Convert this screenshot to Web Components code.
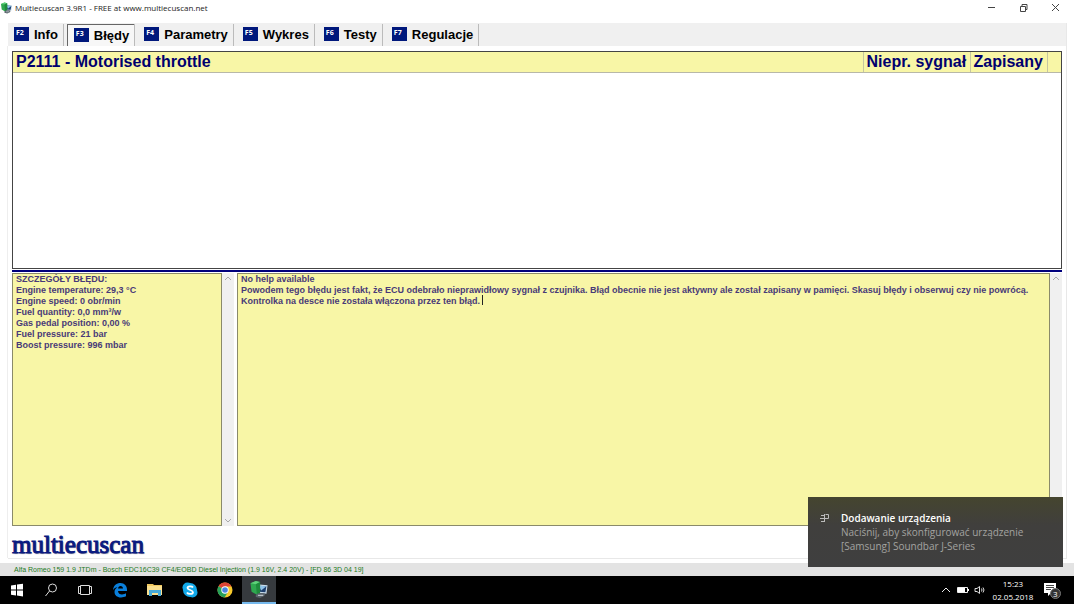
<!DOCTYPE html>
<html lang="pl">
<head>
<meta charset="utf-8">
<title>Multiecuscan 3.9R1</title>
<style>
html, body { margin: 0; height: 100%; }
body { font-family: "Liberation Sans", Arial, sans-serif; background: #fff; overflow: hidden; }
</style>
</head>
<body>
<ecu-desktop></ecu-desktop>

<template id="t-desktop">
<style>
:host { display: flex; flex-direction: column; height: 100vh; min-height: 400px; position: relative; }
ecu-frame { flex: 1; min-height: 0; }
ecu-toast { position: absolute; right: 11px; bottom: 37px; }
</style>
<ecu-titlebar>Multiecuscan 3.9R1 - FREE at www.multiecuscan.net</ecu-titlebar>
<ecu-frame></ecu-frame>
<ecu-status>Alfa Romeo 159 1.9 JTDm - Bosch EDC16C39 CF4/EOBD Diesel Injection (1.9 16V, 2.4 20V) - [FD 86 3D 04 19]</ecu-status>
<ecu-taskbar></ecu-taskbar>
<ecu-toast>
  <span slot="title">Dodawanie urządzenia</span>
  <span slot="line1">Naciśnij, aby skonfigurować urządzenie</span>
  <span slot="line2">[Samsung] Soundbar J-Series</span>
</ecu-toast>
</template>

<template id="t-icon">
<style>
:host { display: block; width: 16px; height: 16px; }
svg { display: block; width: 100%; height: 100%; }
</style>
<svg viewBox="0 0 16 16" aria-hidden="true">
  <path d="M6 3l10 1-1 8-9-1z" fill="#c9dcea"/>
  <path d="M8 4.500l7 .5-1 5.500-6-.5z" fill="#1d3f6e"/>
  <path d="M8 4.500l7 .5-5 4z" fill="#8fc1e8"/>
  <path d="M0 2l5-2 4 1v10l-3 2-5-3z" fill="#2fa850"/>
  <path d="M0 2l5-2 4 1-4 2z" fill="#5fd07a"/>
  <path d="M5 3l4-2v10l-3 2z" fill="#1f8a3c"/>
  <path d="M5 13c2-2 6-2 9-1l-1 2-4 2-4-1z" fill="#59636b"/>
  <path d="M7 13.500h5" stroke="#c6ced3" fill="none"/>
</svg>
</template>

<template id="t-titlebar">
<style>
:host { display: flex; align-items: center; height: 16px; padding: 0 11px 7px 1px; gap: 3px; color: #222; font: 8px/16px "Open Sans", "Noto Sans", sans-serif; }
ecu-icon { width: 11px; height: 12px; }
.name { flex: 1; }
.ctl { display: flex; gap: 18px; }
button { width: 14px; height: 14px; padding: 2px; border: 0; background: none; }
svg { display: block; width: 10px; height: 10px; }
</style>
<ecu-icon></ecu-icon><span class="name"><slot></slot></span>
<div class="ctl">
  <button aria-label="Minimalizuj"><svg viewBox="0 0 10 10" fill="none" stroke="#444"><path d="M1 4.500h7"/></svg></button>
  <button aria-label="Przywróć"><svg viewBox="0 0 10 10" fill="none" stroke="#444"><path d="M1.500 3.500h5v5h-5zM3 3V1.500h5v5H7"/></svg></button>
  <button aria-label="Zamknij"><svg viewBox="0 0 10 10" fill="none" stroke="#444"><path d="M1 1l7 7M8 1l-7 7"/></svg></button>
</div>
</template>

<template id="t-frame">
<style>
:host { display: flex; flex-direction: column; margin: 0 7px 4px 8px; border-right: 1px solid #e8e8e8; border-bottom: 1px solid #e8e8e8; }
nav { display: flex; height: 23px; background: #f0f0f0; }
main { display: flex; flex-direction: column; flex: 1; min-height: 0; padding: 5px 4px 0; border-left: 1px solid #eee; margin-left: -1px; }
ecu-faults { flex: 216 1 0; min-height: 0; }
.bar { height: 2px; margin: 1px 0; background: #00007c; }
.details { display: grid; grid-template-columns: 222px 1fr; gap: 3px; flex: 254 1 0; min-height: 0; }
.logo { height: 32px; font: 25px/38px "Liberation Serif", serif; color: #0a1a80; -webkit-text-stroke: 1px #0a1a80; text-shadow: 1px 1px 1px #8a8a9a; }
</style>
<nav>
  <ecu-tab key="F2">Info</ecu-tab><ecu-tab key="F3" active>Błędy</ecu-tab><ecu-tab key="F4">Parametry</ecu-tab><ecu-tab key="F5">Wykres</ecu-tab><ecu-tab key="F6">Testy</ecu-tab><ecu-tab key="F7">Regulacje</ecu-tab>
</nav>
<main>
  <ecu-faults></ecu-faults>
  <div class="bar"></div>
  <div class="details"><ecu-memo label="Szczegóły błędu" name="details"></ecu-memo><ecu-memo label="Pomoc" name="help" caret></ecu-memo></div>
  <div class="logo">multiecuscan</div>
</main>
</template>

<template id="t-tab">
<style>
:host { display: block; border-right: 1px solid #bbb; height: 22px; box-sizing: border-box; margin-top: 1px; }
button { display: flex; align-items: center; gap: 5px; height: 22px; border: 0; margin: 0 0 0 3px; padding: 0 5px 0 6px; background: none; color: #000; font: bold 13px/22px "Liberation Sans", Arial, sans-serif; }
:host(:first-child) button { margin-left: 0; }
:host([active]) button { border-left: 1px solid #666; border-top: 1px solid #666; background: #f7f7f7; }
kbd { width: 15px; height: 14px; margin-bottom: 2px; box-sizing: border-box; padding-left: 2px; background: #00187c; color: #fff; font: bold 7px/11px "Open Sans", sans-serif; text-align: left; }
</style>
<button><kbd></kbd><slot></slot></button>
</template>

<template id="t-faults">
<style>
:host { display: block; border: 1px solid #444; background: #fff; box-sizing: border-box; }
table { width: 100%; border-collapse: collapse; table-layout: fixed; color: #00006e; font: bold 16px/20px "Liberation Sans", Arial, sans-serif; }
td { height: 20px; padding: 0 3px; background: #f8f6a6; border-right: 1px solid #c6c6a0; border-bottom: 1px solid #b8b8a8; white-space: nowrap; }
td:last-child { border-right: 0; }
.kind { width: 107px; } .state { width: 77px; } .end { width: 14px; }
</style>
<table aria-label="Błędy">
<colgroup><col><col class="kind"><col class="state"><col class="end"></colgroup>
<tbody><tr><td>P2111 - Motorised throttle</td><td>Niepr. sygnał</td><td>Zapisany</td><td></td></tr></tbody></table>
</template>

<template id="t-memo">
<style>
:host { display: flex; position: relative; min-height: 0; min-width: 0; }
textarea { flex: 1; min-width: 0; margin: 0; padding: 0 3px; border: 1px solid #8a8a6a; border-radius: 0; outline: 0; resize: none; overflow: hidden; background: #f8f6a6; color: #483a78; font: bold 9px/11px "Liberation Sans", Arial, sans-serif; }
.scroll { display: flex; flex-direction: column; justify-content: space-between; width: 12px; background: #f0f0f0; }
svg { display: block; width: 12px; height: 12px; }
.caret { display: none; position: absolute; left: 245px; top: 22px; width: 1px; height: 10px; background: #222; }
:host([caret]) .caret { display: block; }
</style>
<textarea readonly spellcheck="false"></textarea>
<div class="scroll"><svg viewBox="0 0 12 12" fill="none" stroke="#aaa"><path d="M3 7l3-3 3 3"/></svg><svg viewBox="0 0 12 12" fill="none" stroke="#aaa"><path d="M3 5l3 3 3-3"/></svg></div>
<i class="caret"></i>
</template>

<template id="t-status">
<style>
:host { display: block; height: 13px; padding-left: 14px; background: #e3e3e3; color: #1c7a1c; font: 7px/13px "Liberation Sans", Arial, sans-serif; white-space: nowrap; overflow: hidden; }
</style><slot></slot>
</template>

<template id="t-toast">
<style>
:host { display: grid; grid-template-columns: 10px 1fr; gap: 11px; width: 255px; height: 70px; box-sizing: border-box; padding: 14px 12px 0; background: linear-gradient(#45452f, #403f3d 40%, #3f3f3f); color: #a3a3a0; font: 10px/14px "Open Sans", "Noto Sans", sans-serif; white-space: nowrap; }
svg { width: 10px; height: 10px; margin-top: 2px; }
p { margin: 0; }
.t { color: #fff; font-weight: 600; }
</style>
<svg viewBox="0 0 10 10" fill="none" stroke="#bbb" aria-hidden="true"><path d="M4.500 1v8M0 5.500h8.500M1 2.500h3M1 8.500h3M5.500 1.500h3v4"/></svg>
<div><p class="t"><slot name="title"></slot></p><p><slot name="line1"></slot></p><p><slot name="line2"></slot></p></div>
</template>

<template id="t-taskbar">
<style>
:host { display: flex; height: 28px; background: #000; color: #fff; }
button { flex: none; display: flex; align-items: center; justify-content: center; width: 35px; height: 28px; padding: 0; border: 0; background: none; color: inherit; }
.sys { width: 34px; }
.app { width: 34px; box-sizing: border-box; background: #363a3e; border-bottom: 2px solid #76b9ed; }
.app ecu-icon { width: 18px; height: 17px; }
svg { display: block; width: 16px; height: 16px; }
.tray { margin-left: auto; display: flex; align-items: center; padding-right: 8px; }
.tray button { width: 17px; }
.tray svg { width: 12px; height: 12px; }
.tray .clock { display: block; width: 50px; font: 8px/13px "Open Sans", "Noto Sans", sans-serif; text-align: center; }
.clock span { display: block; }
.tray .note { width: 28px; }
.tray .note svg { width: 17px; height: 18px; }
text { font: 8px "Open Sans", sans-serif; }
</style>
<button class="sys" aria-label="Start"><svg viewBox="0 0 16 16" fill="#fff"><path d="M2 3.500l5-.8V7.500H2zM8 2.600l6-.8v5.700H8zM2 8.500h5v5l-5-.8zM8 8.500h6v6l-6-.9z"/></svg></button>
<button class="sys" aria-label="Szukaj"><svg viewBox="0 0 16 16" fill="none" stroke="#ddd"><circle cx="9.500" cy="6" r="4"/><path d="M6.500 9l-4 5"/></svg></button>
<button class="sys" aria-label="Widok zadań"><svg viewBox="0 0 16 16" fill="none" stroke="#ddd"><path d="M3.500 3.500h9v9h-9zM3 4.500H1.500v7H3M13 4.500h1.500v7H13"/></svg></button>
<button aria-label="Edge"><svg viewBox="0 0 16 16"><path fill="#0a7fdb" d="M1 8C1.500 3.500 4.500 1 8.500 1 12.500 1 15 4 15 7.500V9H6c0 2.500 2 3.500 4 3.500 1.500 0 3-.5 4-1.200v3C12.500 15 11 15.500 9 15.500 5 15.500 2.500 13 2.500 10c0-2 1-3.700 3-4.700C3.500 5.500 2 6.500 1 8zM6 6.500h5C11 5 10 4 8.500 4 7.200 4 6.300 5 6 6.500z"/></svg></button>
<button aria-label="Eksplorator plików"><svg viewBox="0 0 16 16"><path fill="#f0c860" d="M0 2h6l1 1h8v4H0z"/><path fill="#fbe08f" d="M0 4h15v9H0z"/><path fill="#47a9d8" d="M2 8h12v6h-3v-3H5v3H2z"/></svg></button>
<button aria-label="Skype"><svg viewBox="0 0 16 16"><circle cx="5.500" cy="5.500" r="5" fill="#12a9ea"/><circle cx="10.500" cy="10.500" r="5" fill="#12a9ea"/><circle cx="8" cy="8" r="7" fill="#12a9ea"/><path d="M11 5.500C10 4 5.500 4 5.500 6S11 8 11 10.200 6 12.500 5 10.500" fill="none" stroke="#fff" stroke-width="1.800"/></svg></button>
<button aria-label="Chrome"><svg viewBox="0 0 16 16"><circle cx="8" cy="8" r="7.500" fill="#f7ca2c"/><path fill="#dd4437" d="M8 8L1.500 4.200A7.500 7.500 0 0 1 14.500 4.500H8z"/><path fill="#25a05a" d="M1.500 4.200A7.500 7.500 0 0 0 7.500 15.500L11 10 8 8z"/><circle cx="8" cy="8" r="3.700" fill="#fff"/><circle cx="8" cy="8" r="2.800" fill="#4a86e0"/></svg></button>
<button class="app" aria-label="Multiecuscan"><ecu-icon></ecu-icon></button>
<div class="tray">
  <button aria-label="Ukryte ikony"><svg viewBox="0 0 12 12" fill="none" stroke="#eee"><path d="M2 8l4-4 4 4"/></svg></button>
  <button aria-label="Bateria"><svg viewBox="0 0 12 12"><path d="M.5 3.500h10v5H.5z" fill="none" stroke="#eee"/><path fill="#fff" d="M1 4h7v4H1zM11 5h1v2h-1z"/></svg></button>
  <button aria-label="Głośność"><svg viewBox="0 0 12 12" fill="none" stroke="#ddd"><path d="M1 4.500h2l2.500-2v7L3 7.500H1zM7.500 4.500q1 1.500 0 3M9 3.500q2 2.500 0 5"/></svg></button>
  <button class="clock"><span>15:23</span><span>02.05.2018</span></button>
  <button class="note" aria-label="Powiadomienia"><svg viewBox="0 0 17 18"><path fill="#fff" d="M0 2h12v10H7l-3 3v-3H0z"/><path d="M2 4.500h8M2 6.500h8M2 8.500h5" stroke="#444"/><circle cx="11.500" cy="12.500" r="5" fill="#333" stroke="#777"/><text x="9" y="15.500" fill="#fff">3</text></svg></button>
</div>
</template>

<script>
const memoText = {
  details: `SZCZEGÓŁY BŁĘDU:
Engine temperature: 29,3 °C
Engine speed: 0 obr/min
Fuel quantity: 0,0 mm³/w
Gas pedal position: 0,00 %
Fuel pressure: 21 bar
Boost pressure: 996 mbar`,
  help: `No help available
Powodem tego błędu jest fakt, że ECU odebrało nieprawidłowy sygnał z czujnika. Błąd obecnie nie jest aktywny ale został zapisany w pamięci. Skasuj błędy i obserwuj czy nie powrócą.
Kontrolka na desce nie została włączona przez ten błąd.`
};
class EcuElement extends HTMLElement {
  constructor() {
    super();
    const id = 't-' + this.localName.slice(4);
    this.attachShadow({ mode: 'open' }).append(document.getElementById(id).content.cloneNode(true));
  }
}
class EcuTab extends EcuElement {
  connectedCallback() { this.shadowRoot.querySelector('kbd').textContent = this.getAttribute('key'); }
}
class EcuMemo extends EcuElement {
  connectedCallback() {
    const area = this.shadowRoot.querySelector('textarea');
    area.setAttribute('aria-label', this.getAttribute('label'));
    area.value = memoText[this.getAttribute('name')];
  }
}
customElements.define('ecu-tab', EcuTab);
customElements.define('ecu-memo', EcuMemo);
for (const name of ['icon', 'titlebar', 'faults', 'status', 'toast', 'taskbar', 'frame', 'desktop'])
  customElements.define('ecu-' + name, class extends EcuElement {});
</script>
</body>
</html>
